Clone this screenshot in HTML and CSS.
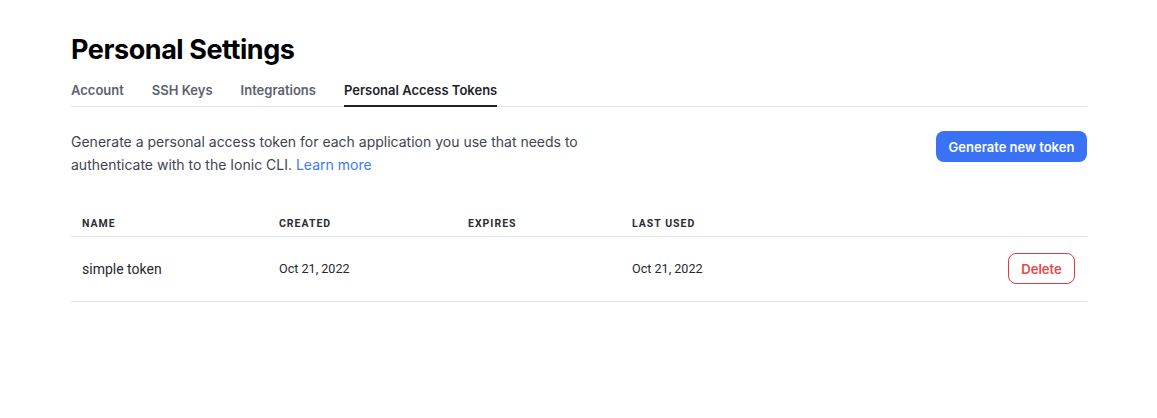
FILE: index.html
```html
<!DOCTYPE html>
<html>
<head>
<meta charset="utf-8">
<link rel="stylesheet" href="styles.css">
</head>
<body>
<main class="page">
  <h1 class="title">Personal Settings</h1>
  <nav class="tabs">
    <a class="tab">Account</a>
    <a class="tab">SSH Keys</a>
    <a class="tab">Integrations</a>
    <a class="tab active">Personal Access Tokens</a>
  </nav>
  <section class="intro">
    <p class="desc">Generate a personal access token for each application you use that needs to authenticate with to the Ionic CLI. <a class="link">Learn more</a></p>
    <button class="primary">Generate new token</button>
  </section>
  <table class="tokens">
    <thead>
      <tr>
        <th class="c-name">Name</th>
        <th class="c-created">Created</th>
        <th class="c-expires">Expires</th>
        <th class="c-last">Last used</th>
        <th class="c-action"></th>
      </tr>
    </thead>
    <tbody>
      <tr>
        <td class="c-name">simple token</td>
        <td class="date">Oct 21, 2022</td>
        <td class="date"></td>
        <td class="date">Oct 21, 2022</td>
        <td class="c-action"><button class="danger">Delete</button></td>
      </tr>
    </tbody>
  </table>
</main>
</body>
</html>
```

FILE: styles.css
```css
* { box-sizing: border-box; }
body {
  margin: 0;
  background: #fff;
  font-family: Inter, "Noto Sans", sans-serif;
  color: #1f2329;
}
.page {
  width: 1016px;
  margin-left: 71px;
  padding-top: 33px;
}
.title {
  margin: 0;
  font-size: 27px;
  font-weight: 700;
  letter-spacing: -0.45px;
  line-height: 34px;
  color: #000;
}
.tabs {
  display: flex;
  gap: 28px;
  margin-top: 15px;
  border-bottom: 1px solid #e1e3e8;
}
.tab {
  font-size: 13px;
  font-weight: 600;
  color: #5b6270;
  padding-bottom: 7px;
  line-height: 16px;
  border-bottom: 2px solid transparent;
  margin-bottom: -1px;
}
.tab.active {
  color: #1f2329;
  border-bottom-color: #222;
}
.intro {
  display: flex;
  justify-content: space-between;
  align-items: flex-start;
  margin-top: 23px;
}
.desc {
  margin: 0;
  width: 530px;
  font-size: 14px;
  line-height: 23px;
  color: #3f4550;
  letter-spacing: 0;
}
.link { color: #3b7af6; }
.primary {
  margin-top: 1px;
  height: 31px;
  width: 151px;
  border: none;
  border-radius: 8px;
  background: #3a72f5;
  color: #fff;
  font-family: Inter, sans-serif;
  font-size: 13px;
  font-weight: 600;
  padding: 0;
}
.tokens {
  width: 100%;
  margin-top: 31px;
  border-collapse: collapse;
  font-family: Roboto, sans-serif;
}
.tokens th {
  text-align: left;
  font-size: 10.5px;
  font-weight: 700;
  letter-spacing: 1px;
  text-transform: uppercase;
  color: #2a2d33;
  height: 29px;
  padding: 4px 12px 0;
  border-bottom: 1px solid #dfe2e8;
}
.tokens td {
  font-size: 14px;
  color: #26292f;
  height: 65px;
  padding: 0 12px;
  border-bottom: 1px solid #dfe2e8;
}
.tokens td.date { font-size: 12.6px; }
.tokens .c-name { width: 196px; padding-left: 11px; }
.c-created { width: 189px; }
.c-expires { width: 164px; }
.c-action { text-align: right; }
.danger {
  width: 67px;
  height: 31px;
  border: 1px solid #e0383e;
  border-radius: 8px;
  background: #fff;
  color: #e5484d;
  font-family: Inter, sans-serif;
  font-size: 13px;
  font-weight: 600;
  padding: 0;
}
```
